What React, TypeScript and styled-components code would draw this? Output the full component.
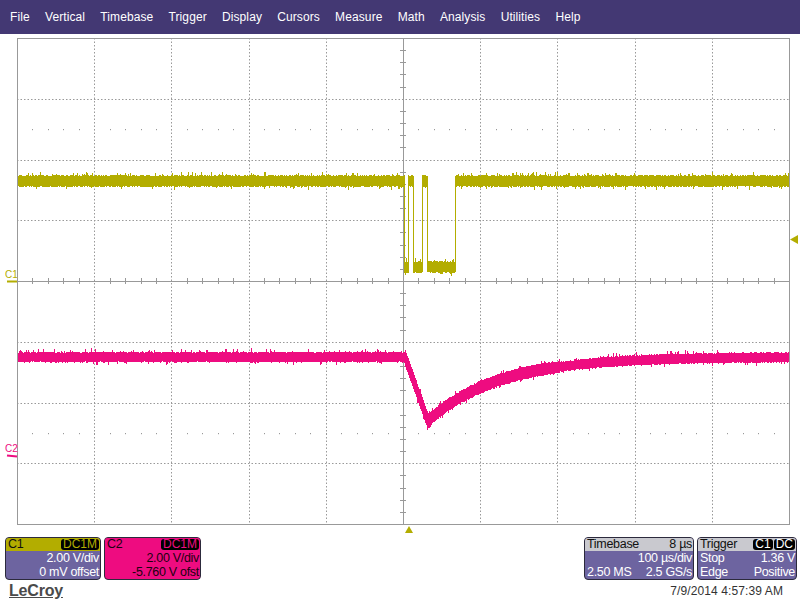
import React from "react"
import styled, { createGlobalStyle } from "styled-components"

const GlobalStyle = createGlobalStyle`
  body {
    margin: 0;
    background: #ffffff;
    font-family: "Liberation Sans", Arial, sans-serif;
  }
`

// grid geometry (page coordinates)
const LEFT = 17
const RIGHT = 789
const TOP = 38
const BOTTOM = 524
const XDIV = (RIGHT - LEFT) / 10
const YDIV = (BOTTOM - TOP) / 8
const CX = LEFT + XDIV * 5
const CY = TOP + YDIV * 4

const YELLOW = "#b3ad00"
const PINK = "#ee0c80"
const GRID = "#999999"

const menuItems = [
  "File",
  "Vertical",
  "Timebase",
  "Trigger",
  "Display",
  "Cursors",
  "Measure",
  "Math",
  "Analysis",
  "Utilities",
  "Help",
]

// small seeded random so the noise is the same every render
const makeRandom = (seed: number) => {
  let a = seed
  return () => {
    a |= 0
    a = (a + 0x6d2b79f5) | 0
    let t = Math.imul(a ^ (a >>> 15), 1 | a)
    t = (t + Math.imul(t ^ (t >>> 7), 61 | t)) ^ t
    return ((t ^ (t >>> 14)) >>> 0) / 4294967296
  }
}

// one vertical stroke per pixel column, like a scope's min/max envelope
const buildTrace = (center: (x: number) => number, half: (x: number) => number, seed: number) => {
  const rand = makeRandom(seed)
  let d = ""
  for (let x = LEFT + 1; x < RIGHT; x++) {
    const c0 = center(x)
    const c1 = center(x + 1)
    const h = half(x)
    let up = h - 0.6 + rand() * 1.2
    let down = h - 0.6 + rand() * 1.2
    if (rand() < 0.12) up += 1 + rand() * 2.5
    if (rand() < 0.08) down += 1 + rand() * 2
    const top = Math.min(c0, c1) - up
    const bottom = Math.max(c0, c1) + down
    d += `M${x + 0.5} ${top.toFixed(1)}V${bottom.toFixed(1)}`
  }
  return d
}

const yellowCenter = (x: number) => {
  const high = 181
  const low = 267
  if (x < 405) return high
  if (x < 409) return low
  if (x < 414) return high
  if (x < 423) return low
  if (x < 428) return high
  if (x < 456) return low
  return high
}

const pinkCenter = (x: number) => {
  const base = 357
  if (x < 405) return base
  if (x < 428) return base + ((x - 405) / 23) * 64
  return base + 64 * Math.exp(-(x - 428) / 70)
}

const pinkHalf = (x: number) => {
  if (x >= 405 && x <= 430) return 7
  if (x > 430 && x < 560) return 6
  return 5
}

const yellowPath = buildTrace(yellowCenter, () => 5.6, 7)
const pinkPath = buildTrace(pinkCenter, pinkHalf, 19)

const Scope = () => {
  const vLines = []
  const hLines = []
  for (let i = 1; i < 10; i++) {
    if (i === 5) continue
    const x = Math.round(LEFT + XDIV * i) + 0.5
    vLines.push(<line key={"v" + i} x1={x} y1={TOP} x2={x} y2={BOTTOM} stroke={GRID} strokeDasharray="1.5 2" />)
  }
  for (let i = 1; i < 8; i++) {
    if (i === 4) continue
    const y = Math.round(TOP + YDIV * i) + 0.5
    hLines.push(<line key={"h" + i} x1={LEFT} y1={y} x2={RIGHT} y2={y} stroke={GRID} strokeDasharray="1.5 2" />)
  }

  // minor ticks on centre axes
  const ticks = []
  for (let i = 1; i < 50; i++) {
    if (i % 5 === 0) continue
    const x = Math.round(LEFT + (XDIV / 5) * i) + 0.5
    ticks.push(<line key={"tx" + i} x1={x} y1={CY - 3} x2={x} y2={CY + 3} stroke={GRID} />)
  }
  for (let i = 1; i < 40; i++) {
    if (i % 5 === 0) continue
    const y = Math.round(TOP + (YDIV / 5) * i) + 0.5
    ticks.push(<line key={"ty" + i} x1={CX - 3} y1={y} x2={CX + 3} y2={y} stroke={GRID} />)
  }

  // dotted rows at +/- 2.5 div
  const dots = []
  ;[CY - YDIV * 2.5, CY + YDIV * 2.5].forEach((y, r) => {
    for (let i = 1; i < 50; i++) {
      const x = Math.round(LEFT + (XDIV / 5) * i)
      dots.push(<rect key={"d" + r + "-" + i} x={x} y={Math.round(y)} width={1} height={1.2} fill={GRID} />)
    }
  })

  const cx = Math.round(CX) + 0.5
  const cy = Math.round(CY) + 0.5

  return (
    <PlotSvg width={800} height={500} viewBox="0 34 800 500">
      <rect x={LEFT + 0.5} y={TOP + 0.5} width={RIGHT - LEFT} height={BOTTOM - TOP} fill="none" stroke={GRID} />
      {vLines}
      {hLines}
      <line x1={cx} y1={TOP} x2={cx} y2={BOTTOM} stroke={GRID} />
      <line x1={LEFT} y1={cy} x2={RIGHT} y2={cy} stroke={GRID} />
      {ticks}
      {dots}

      <path d={yellowPath} stroke={YELLOW} strokeWidth={1.4} fill="none" shapeRendering="crispEdges" />
      <path d={pinkPath} stroke={PINK} strokeWidth={1.4} fill="none" shapeRendering="crispEdges" />

      {/* channel ground markers */}
      <MarkerText x={5} y={278} fill={YELLOW}>C1</MarkerText>
      <line x1={7} y1={281.5} x2={17} y2={281.5} stroke={YELLOW} strokeWidth={2} />
      <MarkerText x={5} y={452} fill={PINK}>C2</MarkerText>
      <line x1={7} y1={455.5} x2={17} y2={456.5} stroke={PINK} strokeWidth={2} />

      {/* trigger level and position */}
      <polygon points="790,239.5 798,235 798,244" fill={YELLOW} />
      <polygon points="409,526 413,533 405,533" fill={YELLOW} />
    </PlotSvg>
  )
}

const App = () => {
  return (
    <Screen>
      <GlobalStyle />
      <MenuBar>
        {menuItems.map(item => (
          <MenuItem key={item}>{item}</MenuItem>
        ))}
      </MenuBar>
      <Scope />
      <PanelRow>
        <PanelGroup>
          <Panel $w={96}>
            <PanelHead $bg={YELLOW} $color="#111">
              <span>C1</span>
              <Badge $color={YELLOW}>DC1M</Badge>
            </PanelHead>
            <PanelLine>
              <span />
              <span>2.00 V/div</span>
            </PanelLine>
            <PanelLine>
              <span />
              <span>0 mV offset</span>
            </PanelLine>
          </Panel>
          <Panel $w={97} $bg={PINK} $color="#1c0010">
            <PanelHead $bg={PINK} $color="#1c0010">
              <span>C2</span>
              <Badge $color={PINK}>DC1M</Badge>
            </PanelHead>
            <PanelLine>
              <span />
              <span>2.00 V/div</span>
            </PanelLine>
            <PanelLine>
              <span />
              <span>-5.760 V ofst</span>
            </PanelLine>
          </Panel>
        </PanelGroup>
        <PanelGroup>
          <Panel $w={110}>
            <PanelHead $bg="#c9c9cf" $color="#111">
              <span>Timebase</span>
              <span>8 µs</span>
            </PanelHead>
            <PanelLine>
              <span />
              <span>100 µs/div</span>
            </PanelLine>
            <PanelLine>
              <span>2.50 MS</span>
              <span>2.5 GS/s</span>
            </PanelLine>
          </Panel>
          <Panel $w={100}>
            <PanelHead $bg="#c9c9cf" $color="#111">
              <span>Trigger</span>
              <BadgePair>
                <Badge $color="#fff">C1</Badge>
                <Badge $color="#fff">DC</Badge>
              </BadgePair>
            </PanelHead>
            <PanelLine>
              <span>Stop</span>
              <span>1.36 V</span>
            </PanelLine>
            <PanelLine>
              <span>Edge</span>
              <span>Positive</span>
            </PanelLine>
          </Panel>
        </PanelGroup>
      </PanelRow>
      <Footer>
        <Logo>LeCroy</Logo>
        <Stamp>7/9/2014 4:57:39 AM</Stamp>
      </Footer>
    </Screen>
  )
}

const Screen = styled.div`
  width: 800px;
  height: 600px;
  overflow: hidden;
  background: #ffffff;
`

const MenuBar = styled.div`
  height: 34px;
  background: #433873;
  display: flex;
  align-items: center;
  gap: 15.2px;
  padding-left: 10px;
`

const MenuItem = styled.div`
  color: #ffffff;
  font-size: 12px;
  letter-spacing: 0.1px;
`

const PlotSvg = styled.svg`
  display: block;
`

const MarkerText = styled.text`
  font-family: "Liberation Sans", Arial, sans-serif;
  font-size: 10px;
`

const PanelRow = styled.div`
  display: flex;
  justify-content: space-between;
  padding: 3px 3px 0 5px;
`

const PanelGroup = styled.div`
  display: flex;
  gap: 3px;
`

const Panel = styled.div<{ $w: number; $bg?: string; $color?: string }>`
  width: ${p => p.$w}px;
  height: 43px;
  box-sizing: border-box;
  border: 1px solid #2c2a3c;
  border-radius: 4px;
  overflow: hidden;
  background: ${p => p.$bg || "#6d64a0"};
  color: ${p => p.$color || "#ffffff"};
  font-size: 12.5px;
  letter-spacing: -0.3px;
  line-height: 14px;
`

const PanelHead = styled.div<{ $bg: string; $color: string }>`
  height: 13px;
  background: ${p => p.$bg};
  color: ${p => p.$color};
  display: flex;
  justify-content: space-between;
  align-items: center;
  padding: 0 1px 0 2px;
  line-height: 13px;
`

const PanelLine = styled.div`
  display: flex;
  justify-content: space-between;
  padding: 0 1px 0 2px;
  height: 14px;
`

const Badge = styled.span<{ $color: string }>`
  background: #000000;
  color: ${p => p.$color};
  border-radius: 3px;
  padding: 0 2px;
  height: 11px;
  line-height: 11px;
  font-size: 12px;
  letter-spacing: 0;
`

const BadgePair = styled.span`
  display: flex;
  gap: 1px;
`

const Footer = styled.div`
  display: flex;
  justify-content: space-between;
  align-items: center;
  padding: 2px 17px 0 9px;
`

const Logo = styled.div`
  font-size: 16px;
  font-weight: bold;
  color: #4a4a4a;
  text-decoration: underline;
  letter-spacing: -0.2px;
`

const Stamp = styled.div`
  font-size: 12px;
  color: #333333;
  letter-spacing: 0.1px;
`

export default App
